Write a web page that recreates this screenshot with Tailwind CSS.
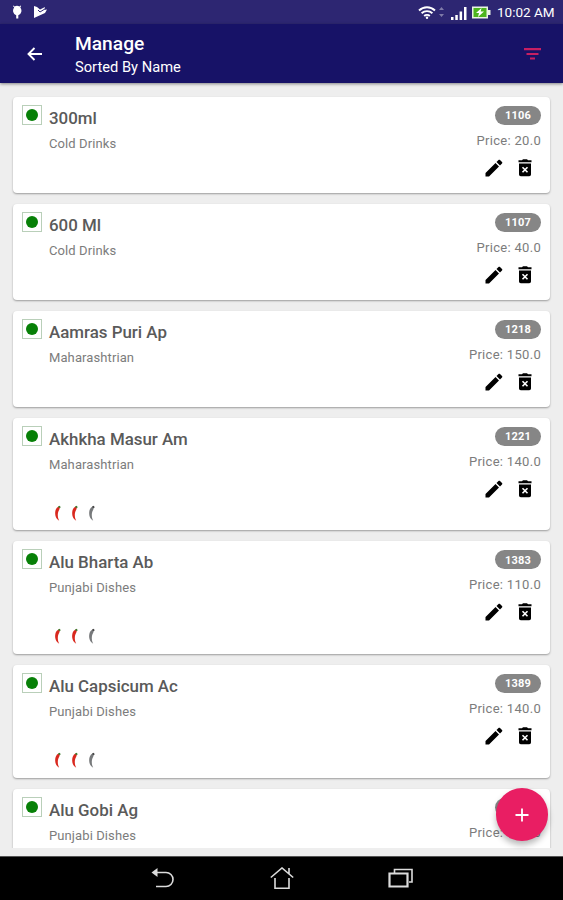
<!DOCTYPE html>
<html lang="en">
<head>
    <meta charset="UTF-8">
    <meta name="viewport" content="width=device-width, initial-scale=1.0">
    <title>Manage</title>
    <script src="https://cdn.jsdelivr.net/npm/@tailwindcss/browser@4"></script>
</head>
<body class="bg-[#eeeeee] font-['Roboto',sans-serif]">
    <div class="relative flex flex-col h-[900px] w-[563px] overflow-hidden">
        <!-- Status bar -->
        <div class="flex h-6 shrink-0 items-center bg-[#2d2672] pl-[11px] pr-2 text-white">
            <svg class="h-4 w-3" viewBox="0 0 12 16" fill="currentColor">
                <path d="M2.500 1.500l1 1a5 5 0 0 1 5 0l1-1 .6.6-.8 1.400a5 5 0 0 1-2 7.800V14.500H5.200v-3.200a5 5 0 0 1-2-7.800L1.900 2.100z" />
            </svg>
            <svg class="ml-2.5 h-4 w-4" viewBox="0 0 16 16" fill="currentColor">
                <path d="M1 2l3 1 3 2.500L12 3l-1 3 3-.5-2 3.500L1 14z" />
                <path d="M5 6l2 2 4-2.500" stroke="#2d2672" fill="none" />
            </svg>
            <div class="ml-auto flex items-center">
                <svg class="h-[15px] w-[18px]" viewBox="0 0 18 15" fill="none" stroke="currentColor" stroke-width="1.9">
                    <path d="M1 5.500a11.500 11.500 0 0 1 16 0M3.600 8.300a7.800 7.800 0 0 1 10.800 0M6.200 11a4 4 0 0 1 5.600 0" />
                    <circle cx="9" cy="12.700" r="1.200" fill="currentColor" stroke="none" />
                </svg>
                <svg class="ml-[3px] h-3 w-[5px]" viewBox="0 0 5 12" fill="#7f7aa8">
                    <path d="M0 4l2.500-3L5 4zM0 8l2.500 3L5 8z" />
                </svg>
                <svg class="ml-[7px] mt-0.5 h-[14px] w-[16px]" viewBox="0 0 16 14" fill="currentColor">
                    <path d="M0 11h2.500v3H0zM4.300 9h2.500v5H4.300zM8.600 5.500h2.500V14H8.600zM13 1h2.500v13H13z" />
                </svg>
                <svg class="ml-[5px] h-[13px] w-[19px]" viewBox="0 0 19 12">
                    <path d="M0 0h16v3.500h2.500v5H16V12H0z" fill="#e9f3e4" />
                    <path d="M1.500 1.500h13v9h-13z" fill="#4cb51e" />
                    <path d="M9.500 1.500L4 6.500h3l-1 4 6-5.500H8.700z" fill="#fff" />
                </svg>
                <span class="ml-[6px] w-[58px] whitespace-nowrap text-[13.5px] leading-6">10:02 AM</span>
            </div>
        </div>

        <!-- App bar -->
        <header class="z-10 flex h-[59px] shrink-0 items-center bg-[#171267] pl-[26px] pr-[22px] text-white shadow-[0_1px_3px_rgba(0,0,0,0.45)]">
            <svg class="h-[18px] w-[18px]" viewBox="0 0 18 18" fill="none" stroke="currentColor" stroke-width="1.9">
                <path d="M16 9H2.500M8.500 3L2.500 9l6 6" />
            </svg>
            <div class="ml-[31px] mt-[3px]">
                <h1 class="text-[19.2px] font-medium leading-6">Manage</h1>
                <p class="text-[14.7px] leading-[22px]">Sorted By Name</p>
            </div>
            <svg class="ml-auto h-3 w-[17px]" viewBox="0 0 17 12" fill="#c81f62">
                <path d="M0 0h17v2.200H0zM2.500 5h12v2h-12zM6 9.500h5v2H6z" />
            </svg>
        </header>

        <!-- Item list -->
        <main class="flex h-[765px] shrink-0 flex-col gap-[11px] overflow-hidden px-[13px] pt-[13.5px]" id="itemList"></main>

        <!-- Navigation bar -->
        <nav class="mt-auto flex h-11 shrink-0 items-center border-t border-[#555] bg-black pl-[151px] text-[#dcdcdc]">
            <svg class="h-6 w-6" viewBox="0 0 24 24" fill="none" stroke="currentColor" stroke-width="1.6">
                <path d="M4 5.500h11a6.500 6.500 0 0 1 0 14H5" />
                <path d="M.5 5.500L6.500 1v9z" fill="currentColor" stroke="none" />
            </svg>
            <svg class="ml-[95px] h-6 w-6" viewBox="0 0 24 24" fill="none" stroke="currentColor" stroke-width="1.6">
                <path d="M.8 10.500L12 1l11.200 9.500M5 11v10.200h14V11M19 7V1" />
            </svg>
            <svg class="ml-[94px] h-6 w-[26px]" viewBox="0 0 26 24" fill="none" stroke="currentColor">
                <path d="M6.500 6V2.500h17.500V15H21" stroke-width="1.6" />
                <path d="M1.500 6.500h18v13h-18z" stroke-width="2.200" />
            </svg>
        </nav>

        <button class="absolute left-[496px] top-[788px] z-20 flex h-[53px] w-[52px] items-center justify-center rounded-full bg-[#e91e63] text-white shadow-[0_4px_6px_rgba(0,0,0,0.28)]">
            <svg class="h-[14px] w-[14px]" viewBox="0 0 14 14" stroke="currentColor" stroke-width="1.8">
                <path d="M7 .5v13M.5 7h13" />
            </svg>
        </button>
    </div>

    <script>
        const items = [
            { name: '300ml', category: 'Cold Drinks', code: 1106, price: '20.0', spicy: false },
            { name: '600 Ml', category: 'Cold Drinks', code: 1107, price: '40.0', spicy: false },
            { name: 'Aamras Puri Ap', category: 'Maharashtrian', code: 1218, price: '150.0', spicy: false },
            { name: 'Akhkha Masur Am', category: 'Maharashtrian', code: 1221, price: '140.0', spicy: true },
            { name: 'Alu Bharta Ab', category: 'Punjabi Dishes', code: 1383, price: '110.0', spicy: true },
            { name: 'Alu Capsicum Ac', category: 'Punjabi Dishes', code: 1389, price: '140.0', spicy: true },
            { name: 'Alu Gobi Ag', category: 'Punjabi Dishes', code: 1384, price: '110.0', spicy: true },
        ];

        function chili(body, stem) {
            return `
                <svg class="h-[17px] w-[7px]" viewBox="0 0 7 17">
                    <path d="M4.500 1.500C1.500 3 .6 7 1.500 11c.6 2.200 1.800 3.700 3.700 4.700C4 13.500 3.600 11 3.900 8.500 4.100 6.500 5.300 5 5.800 3z" fill="${body}" />
                    <path d="M4 1.500L6 .8l.6 2L5 3z" fill="${stem}" />
                </svg>`;
        }

        const chilies = `
            <div class="mt-[30px] flex gap-[10px] pl-[5px]">
                ${chili('#d9281e', '#3c7a2c')}${chili('#d9281e', '#3c7a2c')}${chili('#77797b', '#444')}
            </div>`;

        document.getElementById('itemList').innerHTML = items.map((item) => `
            <div class="${item.spicy ? 'h-[112.8px]' : 'h-24'} flex shrink-0 rounded-[4px] bg-white pl-[9px] pr-[9px] pt-2 shadow-[0_1px_2px_rgba(0,0,0,0.35)]">
                <div class="flex h-5 w-5 items-center justify-center border border-[#b9cfb9]">
                    <div class="h-3 w-3 rounded-full bg-[#078007]"></div>
                </div>
                <div class="ml-[7px] flex-1">
                    <h2 class="mt-0.5 text-[16.9px] font-medium leading-[22px] text-[#5a5a5a]">${item.name}</h2>
                    <p class="mt-[5px] text-[13px] leading-5 tracking-[0.1px] text-[#7c7c7c]">${item.category}</p>
                    ${item.spicy ? chilies : ''}
                </div>
                <div class="flex flex-col items-end">
                    <span class="mt-px flex h-[19px] w-[46px] items-center justify-center rounded-full bg-[#868686] pt-0.5 text-[11px] font-bold tracking-[0.15px] text-white">${item.code}</span>
                    <span class="mt-[6px] text-[13px] leading-5 tracking-[0.3px] text-[#7c7c7c]">Price: ${item.price}</span>
                    <div class="mt-2 flex items-center gap-[15px] pr-[9px]">
                        <svg class="h-[18px] w-[18px]" viewBox="0 0 18 18">
                            <path d="M.5 14v3.500H4L14 7.500 10.500 4zM11.500 3l3.500 3.500 2-2c.5-.5.5-1 0-1.500L15 1c-.5-.5-1-.5-1.500 0z" />
                        </svg>
                        <svg class="h-[18px] w-[14px]" viewBox="0 0 14 18">
                            <path d="M.5 1.300H4L5 .3h4l1 1h3.500v2H.5zM1 4.500h12V15.500a1.800 1.800 0 0 1-1.800 1.800H2.800A1.800 1.800 0 0 1 1 15.500z" />
                            <path d="M4.500 8.300l5 5M9.500 8.300l-5 5" stroke="#fff" stroke-width="1.600" />
                        </svg>
                    </div>
                </div>
            </div>
        `).join('');
    </script>
</body>
</html>
